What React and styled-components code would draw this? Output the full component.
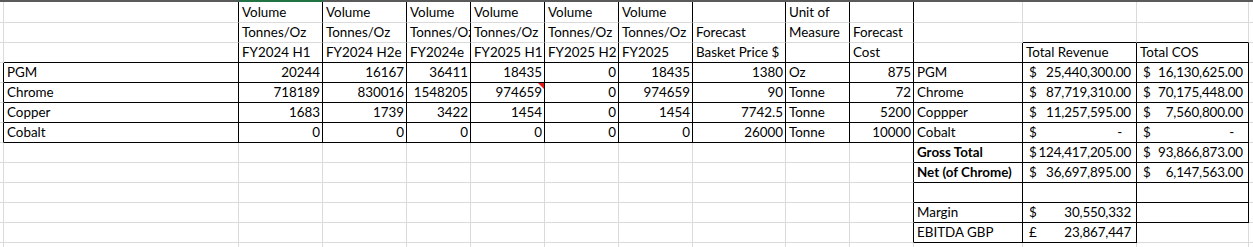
import React from 'react';
import styled, { createGlobalStyle, css } from 'styled-components';

const GlobalStyle = createGlobalStyle`
  body { margin: 0; background: #fff; overflow: hidden; }
`

const COLS = [4, 235, 84, 84, 64, 74, 74, 74, 93, 64, 64, 109, 114, 112, 64];
const TRACKS = COLS.map(w => w + 'px').join(' ');
const GRID = '#dadada';

const Sheet = styled.div`
    width: 1253px;
    height: 247px;
    overflow: hidden;
    font-family: Lato, "Open Sans", sans-serif;
    font-size: 13.4px;
    color: #000;
`
const HeaderBar = styled.div`
    display: grid;
    grid-template-columns: ${TRACKS};
    height: 2px;
    background: #5a5a5a;
`
const Selected = styled.div`
    grid-column: 3;
    background: #217346;
`
const Grid = styled.div`
    display: grid;
    grid-template-columns: ${TRACKS};
    grid-template-rows: 21px repeat(12, 20px);
`
const Cell = styled.div`
    box-sizing: border-box;
    min-width: 0;
    position: relative;
    display: flex;
    align-items: flex-end;
    justify-content: ${p => p.$right ? 'flex-end' : 'flex-start'};
    padding: ${p => p.$flush ? '0 0 2px 0' : '0 2px 2px 3px'};
    line-height: 15px;
    white-space: nowrap;
    overflow: hidden;
    font-weight: ${p => p.$bold ? 700 : 400};
    border-right: 1px solid ${p => p.$r ? '#000' : GRID};
    border-bottom: 1px solid ${p => p.$b ? '#000' : GRID};
    ${p => p.$note && css`
        &::after {
            content: '';
            position: absolute;
            top: 0;
            right: 0;
            border-top: 6px solid #e41b17;
            border-left: 6px solid transparent;
        }
    `}
`
const Acc = styled.span`
    flex: 1;
    display: flex;
    justify-content: space-between;
    padding: 0 ${p => p.$dash ? '14px' : '5px'} 0 6px;
`
const AccValue = styled.span`
    letter-spacing: -0.15px;
`

const n = v => ({ kind: 'num', text: v });
const acc = (sym, text) => ({ kind: 'acc', sym, text });
const bold = v => ({ kind: 'bold', text: v });

const rows = [
    ['', '', 'Volume', 'Volume', 'Volume', 'Volume', 'Volume', 'Volume', '', 'Unit of', '', '', '', '', ''],
    ['', '', 'Tonnes/Oz', 'Tonnes/Oz', 'Tonnes/Oz', 'Tonnes/Oz', 'Tonnes/Oz', 'Tonnes/Oz', 'Forecast', 'Measure', 'Forecast', '', '', '', ''],
    ['', '', 'FY2024 H1', 'FY2024 H2e', 'FY2024e', 'FY2025 H1', 'FY2025 H2', 'FY2025', 'Basket Price $', '', 'Cost', '', 'Total Revenue', 'Total COS', ''],
    ['', 'PGM', n('20244'), n('16167'), n('36411'), n('18435'), n('0'), n('18435'), n('1380'), 'Oz', n('875'), 'PGM', acc('$', '25,440,300.00'), acc('$', '16,130,625.00'), ''],
    ['', 'Chrome', n('718189'), n('830016'), n('1548205'), { kind: 'num', text: '974659', note: true }, n('0'), n('974659'), n('90'), 'Tonne', n('72'), 'Chrome', acc('$', '87,719,310.00'), acc('$', '70,175,448.00'), ''],
    ['', 'Copper', n('1683'), n('1739'), n('3422'), n('1454'), n('0'), n('1454'), n('7742.5'), 'Tonne', n('5200'), 'Coppper', acc('$', '11,257,595.00'), acc('$', '7,560,800.00'), ''],
    ['', 'Cobalt', n('0'), n('0'), n('0'), n('0'), n('0'), n('0'), n('26000'), 'Tonne', n('10000'), 'Cobalt', acc('$', '-'), acc('$', '-'), ''],
    ['', '', '', '', '', '', '', '', '', '', '', bold('Gross Total'), acc('$', '124,417,205.00'), acc('$', '93,866,873.00'), ''],
    ['', '', '', '', '', '', '', '', '', '', '', bold('Net (of Chrome)'), acc('$', '36,697,895.00'), acc('$', '6,147,563.00'), ''],
    ['', '', '', '', '', '', '', '', '', '', '', '', '', '', ''],
    ['', '', '', '', '', '', '', '', '', '', '', 'Margin', acc('$', '30,550,332'), '', ''],
    ['', '', '', '', '', '', '', '', '', '', '', 'EBITDA GBP', acc('£', '23,867,447'), '', ''],
    ['', '', '', '', '', '', '', '', '', '', '', '', '', '', ''],
];

// which cell edges carry a black border (rows 1-based, col 0 = row header stub)
const inRange = (v, a, b) => v >= a && v <= b;
const rightBlack = (r, c) => {
    if (c === 0) return inRange(r, 4, 7);
    if (c <= 9) return inRange(r, 1, 7);
    if (c === 10) return inRange(r, 1, 12);
    if (c === 11 || c === 12) return inRange(r, 3, 12);
    if (c === 13) return inRange(r, 3, 11);
    return false;
};
const bottomBlack = (r, c) => {
    if (r === 2) return inRange(c, 12, 13);
    if (inRange(r, 3, 7)) return inRange(c, 1, 13);
    if (inRange(r, 8, 11)) return inRange(c, 11, 13);
    if (r === 12) return inRange(c, 11, 12);
    return false;
};

const Content = ({ v }) => {
    if (typeof v === 'string') return v;
    if (v.kind === 'acc') {
        return <Acc $dash={v.text === '-'}><span>{v.sym}</span><AccValue>{v.text}</AccValue></Acc>;
    }
    return v.text;
};

const App = () => {
    return <Sheet>
        <GlobalStyle />
        <HeaderBar><Selected /></HeaderBar>
        <Grid>
            {rows.map((row, ri) => row.map((v, ci) => {
                const obj = typeof v === 'string' ? {} : v;
                return (
                    <Cell
                        key={ri + '-' + ci}
                        $r={rightBlack(ri + 1, ci)}
                        $b={bottomBlack(ri + 1, ci)}
                        $right={obj.kind === 'num'}
                        $bold={obj.kind === 'bold'}
                        $note={!!obj.note}
                        $flush={obj.kind === 'acc' || ci === 0}
                    >
                        <Content v={v} />
                    </Cell>
                );
            }))}
        </Grid>
    </Sheet>;
};

export default App;
